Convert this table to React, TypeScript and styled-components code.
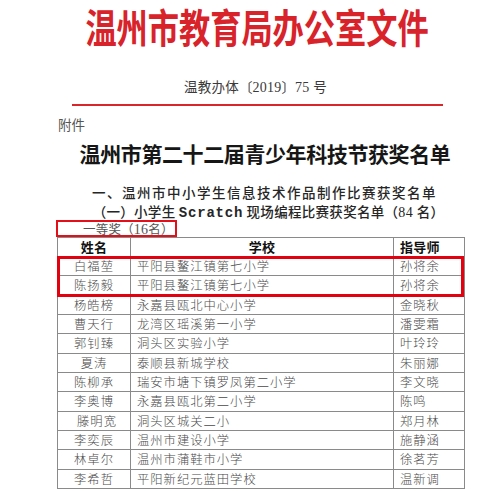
import React from "react";
import styled, { createGlobalStyle } from "styled-components";

const Global = createGlobalStyle`
  html, body { margin: 0; padding: 0; background: #fff; }
  body {
    font-family: "Noto Sans CJK SC", "Liberation Serif", serif;
    overflow: hidden;
  }
`;

const Page = styled.div`
  width: 499px;
  height: 491px;
  overflow: hidden;
  display: flex;
  flex-direction: column;
  background: #fff;
`;

const TitleBar = styled.div`
  margin-top: 4px;
  height: 44px;
  display: flex;
  justify-content: center;
  align-items: center;
  padding-left: 14px;
`;

const RedTitle = styled.span`
  display: inline-block;
  line-height: 44px;
  font-size: 40px;
  font-weight: 600;
  color: #d9232b;
  white-space: nowrap;
  transform: scaleX(0.78);
`;

const DocNo = styled.div`
  margin-top: 29px;
  padding-left: 12px;
  height: 18px;
  line-height: 18px;
  font-size: 13.5px;
  color: #3a3a3a;
  text-align: center;
  white-space: nowrap;
  letter-spacing: 0.2px;
`;

const Digits = styled.span`
  font-family: "Liberation Serif", serif;
  font-size: 14px;
`;

const RedRule = styled.div`
  margin-top: 9px;
  margin-left: 72px;
  width: 371px;
  height: 2px;
  background: #d9262b;
`;

const Attach = styled.div`
  margin-top: 9px;
  margin-left: 58px;
  height: 18px;
  line-height: 18px;
  font-size: 13.5px;
  color: #555;
`;

const BigTitle = styled.div`
  margin-top: 6px;
  padding-left: 31px;
  height: 28px;
  line-height: 28px;
  font-size: 21px;
  font-weight: 700;
  color: #161616;
  text-align: center;
  white-space: nowrap;
  letter-spacing: -0.4px;
`;

const SubTitle = styled.div<{ $shift: number; $gap: number; $ls: number }>`
  margin-top: ${(p) => p.$gap}px;
  padding-left: ${(p) => p.$shift}px;
  height: 18px;
  line-height: 18px;
  font-size: 13.5px;
  font-weight: 500;
  color: #262626;
  letter-spacing: ${(p) => p.$ls}px;
  text-align: center;
  white-space: nowrap;
`;

const Latin = styled.span`
  font-family: "Liberation Mono", monospace;
  font-weight: 700;
  font-size: 14px;
  letter-spacing: 0.8px;
`;

const AwardBox = styled.div`
  margin-left: 56px;
  width: 121px;
  height: 17px;
  box-sizing: border-box;
  border: 2px solid #e3101a;
  padding-left: 25px;
  line-height: 13px;
  font-size: 12.5px;
  color: #555;
  letter-spacing: 0.2px;
  white-space: nowrap;
  overflow: hidden;
`;

const Table = styled.div`
  position: relative;
  margin-left: 57px;
  width: 408px;
  border-top: 1px solid #8a8a8a;
  border-left: 1px solid #8a8a8a;
  box-sizing: border-box;
`;

const Row = styled.div<{ $head?: boolean }>`
  display: grid;
  grid-template-columns: 73px 263px 71px;
  height: ${(p) => (p.$head ? "19px" : "19.35px")};
  box-sizing: border-box;
  border-bottom: 1px solid #8a8a8a;
  font-weight: ${(p) => (p.$head ? 700 : 300)};
  color: ${(p) => (p.$head ? "#111" : "#4a4a4a")};
`;

const Cell = styled.div<{ $align: "center" | "left"; $nudge?: number }>`
  border-right: 1px solid #8a8a8a;
  text-align: ${(p) => p.$align};
  padding-left: ${(p) => (p.$align === "left" ? 6 : 0) + (p.$nudge || 0)}px;
  font-size: 12.3px;
  line-height: 18px;
  letter-spacing: 1px;
  white-space: nowrap;
  overflow: hidden;
`;

const HeadCell = styled(Cell)`
  font-size: 13px;
  letter-spacing: 0.3px;
`;

const Highlight = styled.div`
  position: absolute;
  left: -1px;
  top: 18px;
  width: 407px;
  height: 41px;
  box-sizing: border-box;
  border: 3px solid #e3000f;
  pointer-events: none;
`;

const rows: [string, string, string, number?][] = [
  ["白福堃", "平阳县鳌江镇第七小学", "孙将余"],
  ["陈扬毅", "平阳县鳌江镇第七小学", "孙将余"],
  ["杨皓榜", "永嘉县瓯北中心小学", "金晓秋"],
  ["曹天行", "龙湾区瑶溪第一小学", "潘雯霜"],
  ["郭钊臻", "洞头区实验小学", "叶玲玲"],
  ["夏涛", "泰顺县新城学校", "朱丽娜"],
  ["陈柳承", "瑞安市塘下镇罗凤第二小学", "李文晓"],
  ["李奥博", "永嘉县瓯北第二小学", "陈鸣"],
  ["滕明宽", "洞头区城关二小", "郑月林", 6],
  ["李奕辰", "温州市建设小学", "施静涵"],
  ["林卓尔", "温州市蒲鞋市小学", "徐茗芳"],
  ["李希哲", "平阳新纪元蓝田学校", "温新调"],
];

export default function App() {
  return (
    <Page>
      <Global />
      <TitleBar>
        <RedTitle>温州市教育局办公室文件</RedTitle>
      </TitleBar>
      <DocNo>
        温教办体〔<Digits>2019</Digits>〕<Digits>75 </Digits>号
      </DocNo>
      <RedRule />
      <Attach>附件</Attach>
      <BigTitle>温州市第二十二届青少年科技节获奖名单</BigTitle>
      <SubTitle $shift={30} $gap={16} $ls={1.5}>
        一、温州市中小学生信息技术作品制作比赛获奖名单
      </SubTitle>
      <SubTitle $shift={38} $gap={1} $ls={0.3}>
        （一）小学生 <Latin>Scratch</Latin> 现场编程比赛获奖名单（<Digits>84 </Digits>名）
      </SubTitle>
      <AwardBox>一等奖（<Digits>16</Digits>名）</AwardBox>
      <Table>
        <Row $head>
          <HeadCell $align="center">姓名</HeadCell>
          <HeadCell $align="center">学校</HeadCell>
          <HeadCell $align="left">指导师</HeadCell>
        </Row>
        {rows.map(([n, s, t, nudge], i) => (
          <Row key={i}>
            <Cell $align="center" $nudge={nudge}>{n}</Cell>
            <Cell $align="left">{s}</Cell>
            <Cell $align="left">{t}</Cell>
          </Row>
        ))}
        <Highlight />
      </Table>
    </Page>
  );
}
